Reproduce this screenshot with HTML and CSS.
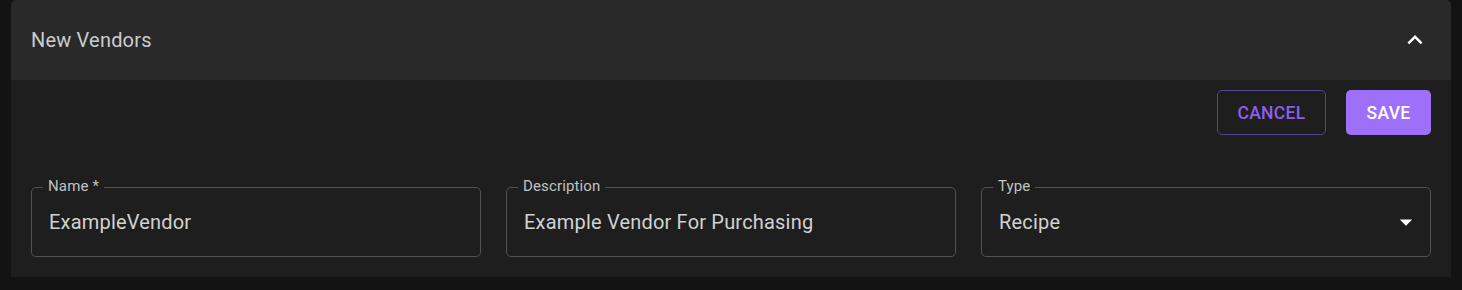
FILE: index.html
```html
<!DOCTYPE html>
<html>
<head>
    <link rel="stylesheet" href="styles.css">
</head>
<body>
    <div class="card">
        <div class="cardhead">
            <div class="title">New Vendors</div>
            <svg class="chev" viewBox="0 0 24 24"><path d="m12 8-6 6 1.41 1.41L12 10.83l4.59 4.58L18 14z"/></svg>
        </div>
        <div class="cardbody">
            <div class="actions">
                <div class="btn outline">Cancel</div>
                <div class="btn filled">Save</div>
            </div>
            <div class="fields">
                <div class="field">
                    <span class="flabel">Name *</span>
                    <div class="fvalue">ExampleVendor</div>
                </div>
                <div class="field">
                    <span class="flabel">Description</span>
                    <div class="fvalue">Example Vendor For Purchasing</div>
                </div>
                <div class="field">
                    <span class="flabel">Type</span>
                    <div class="fvalue">Recipe</div>
                    <svg class="drop" viewBox="0 0 24 24"><path d="M7 10l5 5 5-5z"/></svg>
                </div>
            </div>
        </div>
    </div>
</body>
</html>
```

FILE: styles.css
```css
*{
    margin: 0;
    padding: 0;
    box-sizing: border-box;
}
body {
    font-family: Roboto, "Liberation Sans", sans-serif;
    background-color: #131313;
}
.card{
    margin: 0 11px;
    border-radius: 5px 5px 0 0;
    overflow: hidden;
}
.cardhead{
    height: 80px;
    background-color: #292929;
    display: flex;
    align-items: center;
    justify-content: space-between;
    padding: 0 21px 0 20px;
}
.title{
    font-size: 20px;
    letter-spacing: 0.19px;
    color: #c9cdd0;
}
.chev{
    width: 30px;
    height: 30px;
    fill: #fff;
}
.cardbody{
    background-color: #1e1e1e;
    padding: 10px 20px 20px 20px;
}
.actions{
    display: flex;
    justify-content: flex-end;
    gap: 20px;
}
.btn{
    height: 45px;
    display: flex;
    align-items: center;
    justify-content: center;
    border-radius: 5px;
    font-size: 17.5px;
    font-weight: 500;
    text-transform: uppercase;
    letter-spacing: 0.3px;
}
.outline{
    width: 109px;
    color: #8d5ff0;
    border: 1px solid #57468f;
}
.filled{
    width: 85px;
    background-color: #9e6ff8;
    color: #fff;
}
.fields{
    display: grid;
    grid-template-columns: 1fr 1fr 1fr;
    gap: 25px;
    margin-top: 52px;
}
.field{
    position: relative;
    height: 70px;
    border: 1px solid #535353;
    border-radius: 5px;
    display: flex;
    align-items: center;
    padding: 0 17px;
}
.flabel{
    position: absolute;
    top: -11px;
    left: 11px;
    padding: 0 5px;
    background-color: #1e1e1e;
    font-size: 15px;
    letter-spacing: 0.14px;
    color: #c2c2c2;
}
.fvalue{
    flex: 1;
    font-size: 20px;
    letter-spacing: 0.19px;
    color: #d2d2d2;
}
.drop{
    width: 30px;
    height: 30px;
    fill: #fff;
    margin-right: -8px;
}
```
